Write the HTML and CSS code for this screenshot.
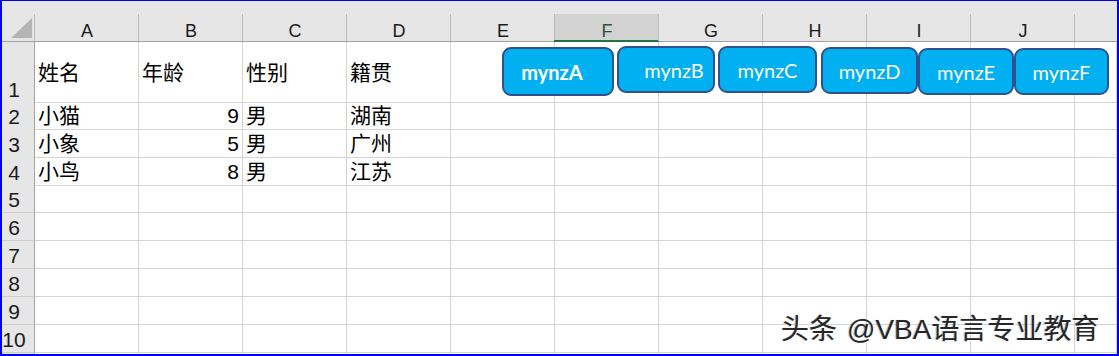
FILE: index.html
```html
<!DOCTYPE html>
<html lang="zh">

<head>
    <meta charset="UTF-8" />
    <title>Sheet1</title>
    <link rel="stylesheet" href="styles.css">
</head>

<body>

    <div class="sheet">
        <div class="row head">
            <div class="ch corner">
                <svg width="21" height="20" viewBox="0 0 21 20"><polygon points="21,0 21,20 0,20" fill="#b4b4b4" /></svg>
            </div>
            <div class="ch">A</div>
            <div class="ch">B</div>
            <div class="ch">C</div>
            <div class="ch">D</div>
            <div class="ch">E</div>
            <div class="ch sel">F</div>
            <div class="ch">G</div>
            <div class="ch">H</div>
            <div class="ch">I</div>
            <div class="ch">J</div>
            <div class="ch last"></div>
        </div>

        <div class="row r1">
            <div class="rh">1</div>
            <div class="c">姓名</div>
            <div class="c">年龄</div>
            <div class="c">性别</div>
            <div class="c">籍贯</div>
            <div class="c"></div><div class="c"></div><div class="c"></div><div class="c"></div><div class="c"></div><div class="c"></div><div class="c"></div>
        </div>

        <div class="row">
            <div class="rh">2</div>
            <div class="c">小猫</div>
            <div class="c num">9</div>
            <div class="c">男</div>
            <div class="c">湖南</div>
            <div class="c"></div><div class="c"></div><div class="c"></div><div class="c"></div><div class="c"></div><div class="c"></div><div class="c"></div>
        </div>

        <div class="row">
            <div class="rh">3</div>
            <div class="c">小象</div>
            <div class="c num">5</div>
            <div class="c">男</div>
            <div class="c">广州</div>
            <div class="c"></div><div class="c"></div><div class="c"></div><div class="c"></div><div class="c"></div><div class="c"></div><div class="c"></div>
        </div>

        <div class="row">
            <div class="rh">4</div>
            <div class="c">小鸟</div>
            <div class="c num">8</div>
            <div class="c">男</div>
            <div class="c">江苏</div>
            <div class="c"></div><div class="c"></div><div class="c"></div><div class="c"></div><div class="c"></div><div class="c"></div><div class="c"></div>
        </div>

        <div class="row">
            <div class="rh">5</div>
            <div class="c"></div><div class="c"></div><div class="c"></div><div class="c"></div><div class="c"></div><div class="c"></div><div class="c"></div><div class="c"></div><div class="c"></div><div class="c"></div><div class="c"></div>
        </div>

        <div class="row">
            <div class="rh">6</div>
            <div class="c"></div><div class="c"></div><div class="c"></div><div class="c"></div><div class="c"></div><div class="c"></div><div class="c"></div><div class="c"></div><div class="c"></div><div class="c"></div><div class="c"></div>
        </div>

        <div class="row">
            <div class="rh">7</div>
            <div class="c"></div><div class="c"></div><div class="c"></div><div class="c"></div><div class="c"></div><div class="c"></div><div class="c"></div><div class="c"></div><div class="c"></div><div class="c"></div><div class="c"></div>
        </div>

        <div class="row">
            <div class="rh">8</div>
            <div class="c"></div><div class="c"></div><div class="c"></div><div class="c"></div><div class="c"></div><div class="c"></div><div class="c"></div><div class="c"></div><div class="c"></div><div class="c"></div><div class="c"></div>
        </div>

        <div class="row">
            <div class="rh">9</div>
            <div class="c"></div><div class="c"></div><div class="c"></div><div class="c"></div><div class="c"></div><div class="c"></div><div class="c"></div><div class="c"></div><div class="c"></div><div class="c"></div><div class="c"></div>
        </div>

        <div class="row">
            <div class="rh">10</div>
            <div class="c"></div><div class="c"></div><div class="c"></div><div class="c"></div><div class="c"></div><div class="c"></div><div class="c"></div><div class="c"></div><div class="c"></div><div class="c"></div><div class="c"></div>
        </div>

        <div class="row">
            <div class="rh"></div>
            <div class="c"></div><div class="c"></div><div class="c"></div><div class="c"></div><div class="c"></div><div class="c"></div><div class="c"></div><div class="c"></div><div class="c"></div><div class="c"></div><div class="c"></div>
        </div>

        <!-- macro buttons floating over the sheet -->
        <button class="shape b-a bold">mynzA</button>
        <button class="shape b-b">mynzB</button>
        <button class="shape b-c">mynzC</button>
        <button class="shape b-d">mynzD</button>
        <button class="shape b-e">mynzE</button>
        <button class="shape b-f">mynzF</button>

        <div class="mark"><span class="mark-src">头条</span>@VBA语言专业教育</div>
    </div>

</body>

</html>
```

FILE: styles.css
```css
* {
    box-sizing: border-box;
}

body {
    margin: 0;
    background-color: #fff;
    font-family: "Liberation Sans", "Noto Sans CJK SC", sans-serif;
    color: #000;
}

.sheet {
    position: relative;
    width: 1119px;
    height: 356px;
    border: solid #0000f2;
    border-width: 1px 2px 2px 2px;
    overflow: hidden;
}

.row {
    display: grid;
    grid-template-columns: 33px repeat(10, 104px) 1fr;
    height: 28px;
}

.row.r1 {
    height: 59px;
}

/* column headers */
.head {
    height: 41px;
    background-color: #e6e6e6;
    border-bottom: 1px solid #a3a3a3;
}

.ch {
    position: relative;
    text-align: center;
    font-size: 18px;
    line-height: 18px;
    padding-top: 21px;
    color: #1b1b1b;
}

.ch::after {
    content: "";
    position: absolute;
    right: 0;
    top: 13px;
    bottom: 0;
    width: 1px;
    background-color: #b9b9b9;
}

.ch.last::after {
    display: none;
}

.corner {
    padding: 17px 0 0 9px;
    text-align: left;
}

.corner svg {
    display: block;
}

.ch.sel {
    background: linear-gradient(#e6e6e6 13px, #d2d2d2 13px);
    color: #24543a;
}

.ch.sel::before {
    content: "";
    position: absolute;
    left: -1px;
    right: 0;
    bottom: -1px;
    height: 2px;
    background-color: #217346;
}

/* row headers */
.rh {
    background-color: #e6e6e6;
    border-right: 1px solid #a3a3a3;
    border-bottom: 1px solid #cdcdcd;
    font-size: 21px;
    line-height: 24px;
    padding-right: 8px;
    text-align: center;
    display: flex;
    align-items: flex-end;
    justify-content: center;
    color: #1b1b1b;
}

/* cells */
.c {
    border-right: 1px solid #d4d4d4;
    border-bottom: 1px solid #d4d4d4;
    font-size: 21px;
    line-height: 27px;
    padding: 1px 3px 0 3px;
    white-space: nowrap;
}

.r1 .c {
    line-height: 58px;
    padding-top: 2px;
}

.c.num {
    text-align: right;
}

/* shapes */
.shape {
    position: absolute;
    height: 47px;
    background-color: #00b0f0;
    border: 2px solid #2f528f;
    border-radius: 9px;
    color: #fff;
    font-family: Lato, "Liberation Sans", sans-serif;
    font-size: 20px;
    padding: 0;
    text-align: center;
}

.shape.bold {
    font-weight: bold;
}

.b-a {
    left: 500px;
    top: 46px;
    width: 112px;
    height: 49px;
    padding-right: 12px;
}

.b-b {
    left: 615px;
    top: 45px;
    width: 98px;
    padding-left: 16px;
}

.b-c {
    left: 716px;
    top: 45px;
    width: 99px;
}

.b-d {
    left: 819px;
    top: 46px;
    width: 97px;
}

.b-e {
    left: 916px;
    top: 47px;
    width: 96px;
}

.b-f {
    left: 1012px;
    top: 47px;
    width: 95px;
}

/* watermark */
.mark {
    position: absolute;
    left: 779px;
    top: 314px;
    font-size: 28px;
    line-height: 29px;
    color: #262626;
    white-space: nowrap;
    text-shadow: 1px 1px 0 #fff, -1px 0 1px rgba(0, 0, 0, 0.25);
}

.mark-src {
    margin-right: 10px;
}
```
